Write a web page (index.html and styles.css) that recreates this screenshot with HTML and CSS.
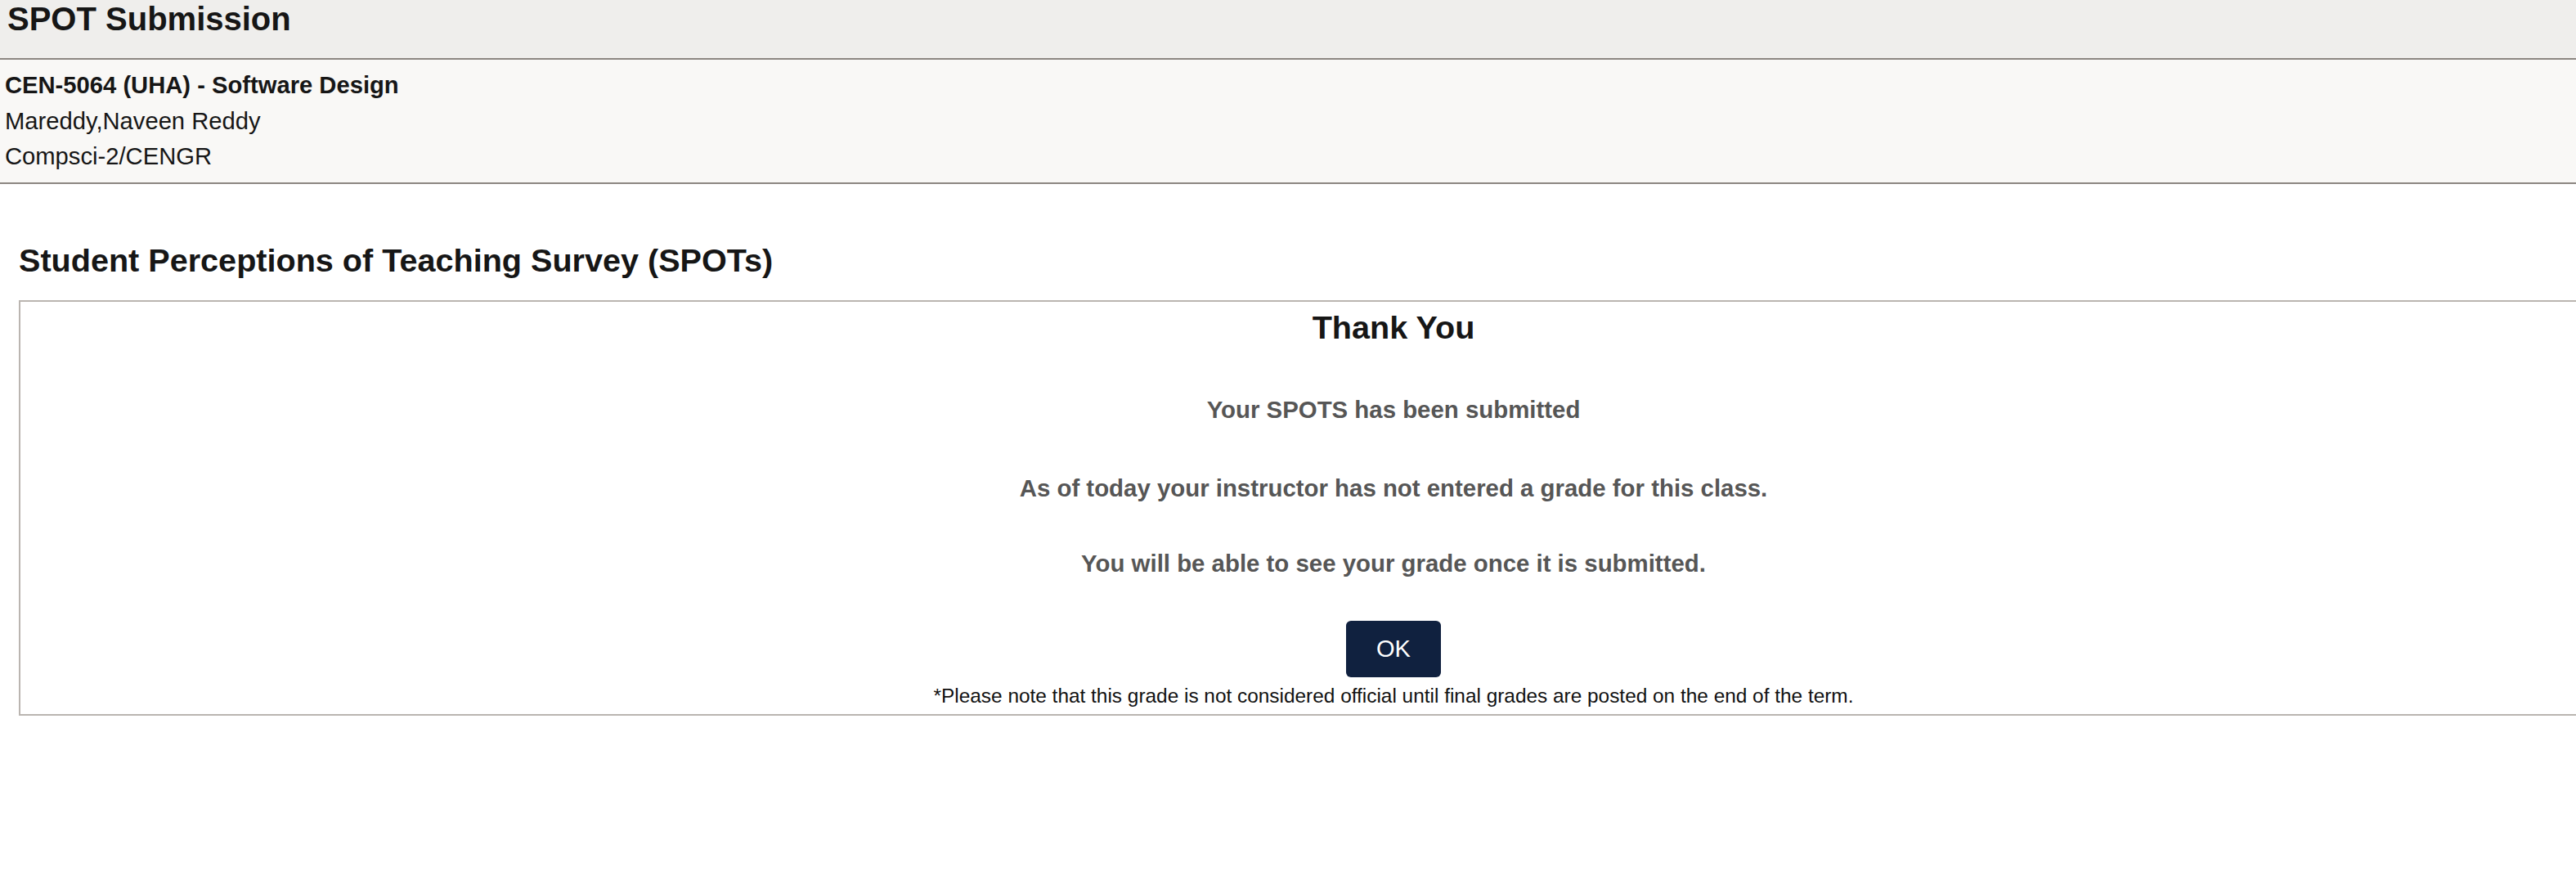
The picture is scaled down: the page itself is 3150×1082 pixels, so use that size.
FILE: index.html
```html
<!DOCTYPE html>
<html lang="en">
<head>
<meta charset="utf-8">
<title>SPOT Submission</title>
<link rel="stylesheet" href="styles.css">
</head>
<body>
<header class="titlebar">
  <h1 class="title">SPOT Submission</h1>
</header>
<section class="course-info">
  <div class="course-name">CEN-5064 (UHA) - Software Design</div>
  <div class="course-line">Mareddy,Naveen Reddy</div>
  <div class="course-line">Compsci-2/CENGR</div>
</section>
<main class="content">
  <h2 class="survey-title">Student Perceptions of Teaching Survey (SPOTs)</h2>
  <div class="panel">
    <h3 class="thanks">Thank You</h3>
    <p class="msg msg-first">Your SPOTS has been submitted</p>
    <p class="msg">As of today your instructor has not entered a grade for this class.</p>
    <p class="msg msg-last">You will be able to see your grade once it is submitted.</p>
    <div class="actions"><button class="ok-btn" type="button">OK</button></div>
    <p class="note">*Please note that this grade is not considered official until final grades are posted on the end of the term.</p>
  </div>
</main>
</body>
</html>
```

FILE: styles.css
```css
html {
  overflow: hidden;
}

body {
  margin: 0;
  background: #ffffff;
  font-family: "Liberation Sans", Arial, Helvetica, sans-serif;
  color: #161616;
}

.titlebar {
  height: 71px;
  background: #efeeec;
  border-bottom: 2px solid #8c8681;
  box-sizing: content-box;
}

.title {
  margin: 0;
  padding: 0 0 0 9px;
  font-size: 40px;
  line-height: 46px;
  font-weight: bold;
  color: #161616;
}

.course-info {
  background: #f9f8f6;
  border-bottom: 2px solid #8c8681;
  padding: 10px 0 9px 6px;
  font-size: 29.2px;
  line-height: 43.5px;
  color: #161616;
}

.course-name {
  font-weight: bold;
}

.content {
  padding: 70px 0 0 23px;
}

.survey-title {
  margin: 0 0 26px 0;
  font-size: 39.6px;
  line-height: 46px;
  font-weight: bold;
  color: #161616;
}

.panel {
  width: 3358px;
  border: 2px solid #bab5b0;
  text-align: center;
  padding-bottom: 8px;
}

.thanks {
  margin: 9px 0 0 0;
  font-size: 39.6px;
  line-height: 44px;
  font-weight: bold;
  color: #161616;
}

.msg {
  margin: 62px 0 0 0;
  font-size: 29.4px;
  line-height: 34px;
  font-weight: bold;
  color: #565656;
}

.msg-last {
  margin-top: 58px;
}

.actions {
  margin-top: 53px;
  display: flex;
  justify-content: center;
}

.ok-btn {
  width: 116px;
  height: 69px;
  border: 0;
  border-radius: 6px;
  background: #10213f;
  color: #ffffff;
  font-family: "Liberation Sans", Arial, Helvetica, sans-serif;
  font-size: 29px;
  padding: 0;
}

.note {
  margin: 9px 0 0 0;
  font-size: 24.4px;
  line-height: 28px;
  color: #111111;
}
```
